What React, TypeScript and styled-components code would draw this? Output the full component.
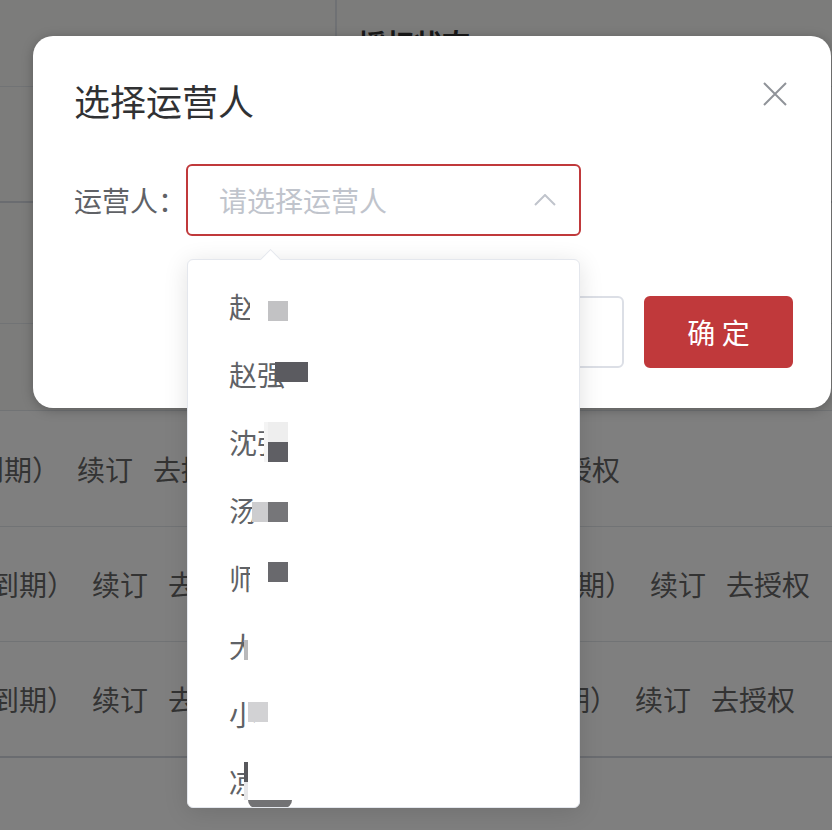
import React from "react";
import styled, { createGlobalStyle } from "styled-components";

const GlobalStyle = createGlobalStyle`
  html, body {
    margin: 0;
    padding: 0;
  }
  body {
    font-family: "Noto Sans CJK SC", "Noto Sans", sans-serif;
    background: #fff;
    overflow: hidden;
  }
`;

const Page = styled.div`
  position: relative;
  width: 832px;
  height: 830px;
  overflow: hidden;
  background: #fff;
`;

const Table = styled.div`
  display: flex;
  flex-direction: column;
`;

const Row = styled.div<{ $h: number; $thick?: boolean; $shade?: boolean }>`
  display: grid;
  grid-template-columns: 337px 1fr;
  height: ${(p) => p.$h}px;
  box-sizing: border-box;
  border-bottom: ${(p) => (p.$thick ? "2px solid #d4d9e1" : "1px solid #e3e6eb")};
  background: ${(p) => (p.$shade ? "#f9f8f6" : "#fff")};
`;

const HeadCell = styled.div<{ $divider?: boolean }>`
  display: flex;
  align-items: center;
  padding-left: 21px;
  border-right: ${(p) => (p.$divider ? "2px solid #dfe2e8" : "none")};
  font-size: 28px;
  font-weight: 700;
  color: #333;
`;

const Cell = styled.div<{ $shift: number }>`
  display: flex;
  align-items: center;
  white-space: nowrap;
  margin-left: ${(p) => p.$shift}px;
  font-size: 28px;
  color: #666;
`;

const Status = styled.span``;

const Action = styled.span<{ $gap: number }>`
  margin-left: ${(p) => p.$gap}px;
`;

const Overlay = styled.div`
  position: absolute;
  inset: 0;
  background: rgba(0, 0, 0, 0.5);
`;

const Modal = styled.div`
  position: absolute;
  left: 33px;
  top: 36px;
  width: 798px;
  height: 372px;
  box-sizing: border-box;
  padding: 44px 38px 40px 41px;
  display: flex;
  flex-direction: column;
  background: #fff;
  border-radius: 20px;
  box-shadow: 0 2px 12px rgba(0, 0, 0, 0.25);
`;

const Title = styled.div`
  font-size: 36px;
  line-height: 40px;
  color: #303133;
`;

const CloseButton = styled.button`
  position: absolute;
  top: 45px;
  right: 43px;
  width: 26px;
  height: 26px;
  padding: 0;
  border: 0;
  background: none;
  cursor: pointer;
  svg {
    display: block;
  }
`;

const FormRow = styled.div`
  display: flex;
  align-items: center;
  height: 72px;
  margin-top: 44px;
`;

const Label = styled.label`
  flex: 0 0 111px;
  white-space: nowrap;
  font-size: 28px;
  color: #606266;
`;

const SelectBox = styled.div`
  flex: 0 0 395px;
  height: 72px;
  box-sizing: border-box;
  display: flex;
  align-items: center;
  justify-content: space-between;
  padding: 0 23px 0 31px;
  border: 2px solid #c0393b;
  border-radius: 6px;
`;

const Placeholder = styled.span`
  font-size: 28px;
  color: #c0c4cc;
`;

const Footer = styled.div`
  display: flex;
  justify-content: flex-end;
  gap: 20px;
  margin-top: 60px;
`;

const Button = styled.button<{ $primary?: boolean }>`
  width: 149px;
  height: 72px;
  box-sizing: border-box;
  border-radius: 6px;
  font-family: inherit;
  font-size: 28px;
  border: 2px solid ${(p) => (p.$primary ? "#c0393b" : "#dcdfe6")};
  background: ${(p) => (p.$primary ? "#c0393b" : "#fff")};
  color: ${(p) => (p.$primary ? "#fff" : "#606266")};
`;

const Dropdown = styled.div`
  position: absolute;
  left: 187px;
  top: 259px;
  width: 393px;
  height: 549px;
  box-sizing: border-box;
  background: #fff;
  border: 1px solid #e4e7ed;
  border-radius: 6px;
  box-shadow: 0 4px 24px rgba(0, 0, 0, 0.12);
  &::before {
    content: "";
    position: absolute;
    top: -8px;
    left: 75px;
    width: 14px;
    height: 14px;
    background: #fff;
    border-top: 1px solid #e4e7ed;
    border-left: 1px solid #e4e7ed;
    transform: rotate(45deg);
  }
`;

const List = styled.ul`
  list-style: none;
  margin: 0;
  padding: 12px 0;
  height: 100%;
  box-sizing: border-box;
  overflow: hidden;
  border-radius: 6px;
`;

const Item = styled.li`
  position: relative;
  height: 68px;
  line-height: 68px;
  padding: 0 40px 0 41px;
  font-size: 28px;
  color: #606266;
  white-space: nowrap;
`;

const Pixel = styled.span<{ $x: number; $y: number; $w: number; $h: number; $c: string; $round?: boolean }>`
  position: absolute;
  left: ${(p) => p.$x}px;
  top: ${(p) => p.$y}px;
  width: ${(p) => p.$w}px;
  height: ${(p) => p.$h}px;
  background: ${(p) => p.$c};
  border-radius: ${(p) => (p.$round ? "0 0 12px 12px" : "0")};
`;

type Mask = { x: number; y: number; w: number; h: number; c: string; round?: boolean };

const operators: { name: string; masks: Mask[] }[] = [
  {
    name: "赵",
    masks: [
      { x: 62, y: 14, w: 18, h: 40, c: "#fff" },
      { x: 80, y: 29, w: 20, h: 20, c: "#c2c2c4" },
    ],
  },
  {
    name: "赵强",
    masks: [{ x: 87, y: 22, w: 33, h: 20, c: "#5b5b60" }],
  },
  {
    name: "沈强",
    masks: [
      { x: 76, y: 14, w: 4, h: 40, c: "#f4f4f4" },
      { x: 80, y: 14, w: 20, h: 20, c: "#eeeeee" },
      { x: 80, y: 34, w: 20, h: 20, c: "#5f5f64" },
    ],
  },
  {
    name: "汤",
    masks: [
      { x: 64, y: 26, w: 16, h: 20, c: "#cdcdcf" },
      { x: 80, y: 26, w: 20, h: 20, c: "#767679" },
    ],
  },
  {
    name: "师",
    masks: [
      { x: 62, y: 16, w: 18, h: 38, c: "#fff" },
      { x: 80, y: 18, w: 20, h: 20, c: "#69696d" },
    ],
  },
  {
    name: "大",
    masks: [
      { x: 60, y: 14, w: 20, h: 40, c: "#fff" },
      { x: 56, y: 28, w: 4, h: 20, c: "#b9b9bb" },
    ],
  },
  {
    name: "小",
    masks: [
      { x: 57, y: 14, w: 3, h: 40, c: "#fff" },
      { x: 60, y: 22, w: 20, h: 20, c: "#d2d2d4" },
    ],
  },
  {
    name: "凉",
    masks: [
      { x: 60, y: 10, w: 44, h: 42, c: "#fff" },
      { x: 56, y: 14, w: 4, h: 20, c: "#58585c" },
      { x: 56, y: 34, w: 4, h: 18, c: "#e6e6e8" },
      { x: 60, y: 52, w: 44, h: 8, c: "#727274", round: true },
    ],
  },
];

const rows = [
  { h: 116, thick: false, left: -80, right: -34 },
  { h: 115, thick: false, left: -65, right: 156 },
  { h: 116, thick: true, left: -65, right: 141 },
];

const RecordCell: React.FC<{ shift: number }> = ({ shift }) => (
  <Cell $shift={shift}>
    <Status>（未到期）</Status>
    <Action $gap={17}>续订</Action>
    <Action $gap={20}>去授权</Action>
  </Cell>
);

const App: React.FC = () => {
  return (
    <Page>
      <GlobalStyle />
      <Table>
        <Row $h={87} $shade>
          <HeadCell $divider />
          <HeadCell>授权状态</HeadCell>
        </Row>
        <Row $h={116} $thick $shade />
        <Row $h={121} $shade />
        <Row $h={87} $shade />
        {rows.map((r, i) => (
          <Row key={i} $h={r.h} $thick={r.thick}>
            <RecordCell shift={r.left} />
            <RecordCell shift={r.right} />
          </Row>
        ))}
      </Table>

      <Overlay>
        <Modal>
          <Title>选择运营人</Title>
          <CloseButton aria-label="关闭">
            <svg width="26" height="26" viewBox="0 0 26 26">
              <path d="M2 2 L24 24 M24 2 L2 24" stroke="#909399" strokeWidth="2" fill="none" />
            </svg>
          </CloseButton>
          <FormRow>
            <Label>运营人：</Label>
            <SelectBox>
              <Placeholder>请选择运营人</Placeholder>
              <svg width="22" height="12" viewBox="0 0 22 12">
                <path d="M1 11 L11 1 L21 11" stroke="#c0c4cc" strokeWidth="2" fill="none" />
              </svg>
            </SelectBox>
          </FormRow>
          <Footer>
            <Button>取 消</Button>
            <Button $primary>确 定</Button>
          </Footer>
        </Modal>

        <Dropdown>
          <List>
            {operators.map((op, i) => (
              <Item key={i}>
                {op.name}
                {op.masks.map((m, j) => (
                  <Pixel key={j} $x={m.x} $y={m.y} $w={m.w} $h={m.h} $c={m.c} $round={m.round} />
                ))}
              </Item>
            ))}
          </List>
        </Dropdown>
      </Overlay>
    </Page>
  );
};

export default App;
